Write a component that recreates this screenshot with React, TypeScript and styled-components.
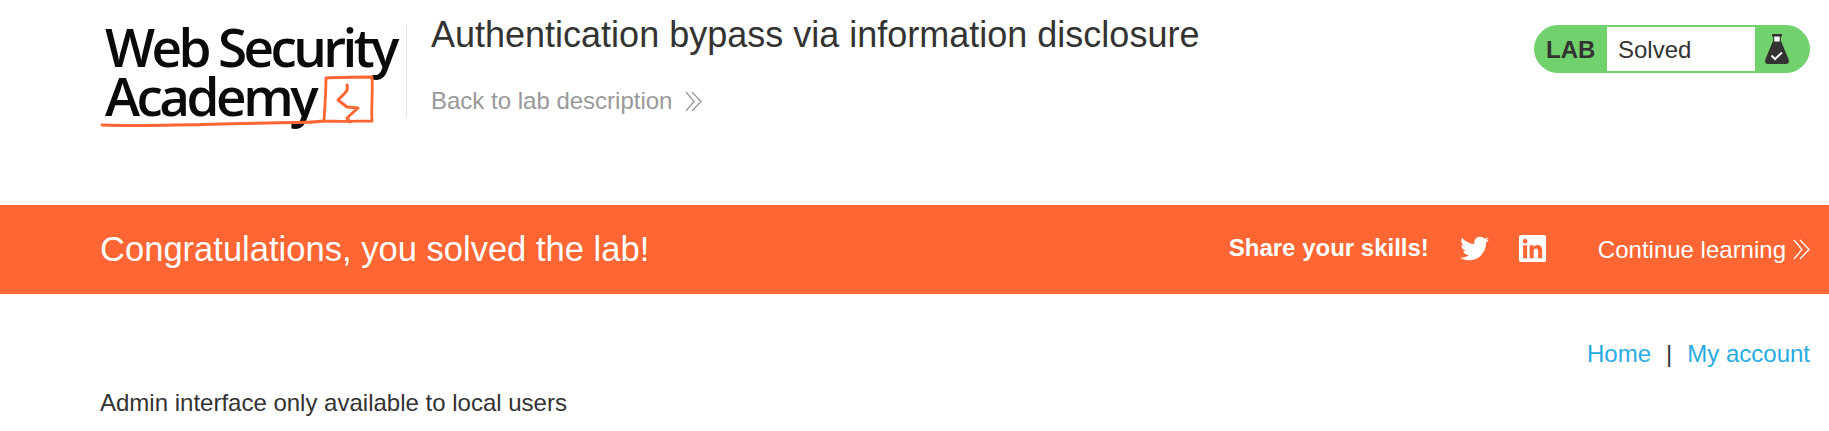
import React from 'react';
import styled, { createGlobalStyle } from 'styled-components';
import { FaTwitter, FaLinkedin } from 'react-icons/fa';

const Global = createGlobalStyle`
  html, body {
    margin: 0;
    padding: 0;
    background: #fff;
    overflow: hidden;
  }

  body {
    font-family: "Liberation Sans", Arial, sans-serif;
    color: #333332;
  }
`;

const Page = styled.div`
  width: 1829px;
  height: 431px;
  overflow: hidden;
`;

const Header = styled.header`
  display: flex;
  align-items: flex-start;
  height: 205px;
  box-sizing: border-box;
  padding: 25px 19px 0 100px;
`;

const LogoLink = styled.a`
  position: relative;
  display: block;
  width: 306px;
  height: 105px;
  flex: none;
`;

const LogoLine = styled.span<{ $spacing: number }>`
  display: block;
  padding-left: 5px;
  height: 49px;
  margin-top: -3px;
  font-family: "Open Sans", sans-serif;
  font-size: 53px;
  font-weight: 600;
  line-height: 49px;
  letter-spacing: ${(p) => p.$spacing}px;
  white-space: nowrap;
  color: #0a0a0a;

  & + & {
    margin-top: 0;
  }
`;

const LogoDrawing = styled.svg`
  position: absolute;
  top: 0;
  left: 0;
`;

const Title = styled.div`
  flex: 1;
  height: 93px;
  border-left: 1px solid #e6e6e6;
  padding-left: 24px;
`;

const Heading = styled.h2`
  margin: -11px 0 0;
  font-size: 36px;
  line-height: 42px;
  font-weight: 400;
  color: #333332;
`;

const BackLink = styled.a`
  display: flex;
  align-items: center;
  gap: 13px;
  margin-top: 31px;
  font-size: 24px;
  line-height: 28px;
  color: #999;
`;

const Widget = styled.div`
  display: flex;
  align-items: stretch;
  width: 276px;
  height: 48px;
  box-sizing: border-box;
  border-radius: 24px;
  background: #70d16d;
  border: 1px solid #70d16d;
  overflow: hidden;
  flex: none;
`;

const WidgetLabel = styled.span`
  width: 72px;
  padding-left: 11px;
  box-sizing: border-box;
  font-size: 24px;
  line-height: 48px;
  font-weight: 700;
  color: #333332;
`;

const WidgetStatus = styled.span`
  width: 148px;
  padding-left: 11px;
  box-sizing: border-box;
  background: #fff;
  font-size: 24px;
  line-height: 46px;
  margin: 1px 0;
  color: #333332;
`;

const WidgetIcon = styled.span`
  display: flex;
  flex: 1;
  align-items: center;
  justify-content: center;
  padding-right: 10px;
`;

const Banner = styled.section`
  display: flex;
  align-items: center;
  height: 89px;
  box-sizing: border-box;
  padding: 0 19px 0 100px;
  background: #ff6633;
  color: #fff;
`;

const BannerTitle = styled.h4`
  flex: 1;
  margin: 0;
  font-size: 34.56px;
  font-weight: 400;
`;

const Share = styled.span`
  font-size: 24px;
  font-weight: 700;
  margin-right: 31px;
  margin-top: -4px;
`;

const SocialIcon = styled.a<{ $gap: number; $size: number }>`
  display: flex;
  color: #fff;
  margin-right: ${(p) => p.$gap}px;
  margin-top: -2px;
  font-size: ${(p) => p.$size}px;
`;

const Continue = styled.a`
  display: flex;
  align-items: center;
  gap: 7px;
  font-size: 24px;
  color: #fff;
`;

const Content = styled.main`
  padding: 46px 19px 0 100px;
`;

const TopLinks = styled.nav`
  display: flex;
  justify-content: flex-end;
  align-items: center;
  gap: 15px;
  font-size: 24px;
  line-height: 28px;
  color: #333332;
`;

const TopLink = styled.a`
  color: #29abe2;
`;

const Message = styled.p`
  margin: 21px 0 0;
  font-size: 24px;
  line-height: 28px;
  color: #333332;
`;

const Chevrons: React.FC<{ color: string }> = ({ color }) => (
  <svg width="17" height="21" viewBox="0 0 17 21" fill="none" stroke={color} strokeWidth="1.3">
    <path d="M1 1l8 9.500-8 9.500M7 1l9 9.500-9 9.500" />
  </svg>
);

const LogoMark = () => (
  <LogoDrawing width="306" height="105" viewBox="0 0 306 105" fill="none" stroke="#ff6633" strokeLinecap="round" strokeLinejoin="round">
    <path d="M2 100c60 2 130-2 196-2.500 10 0 18-.5 26-1.500" strokeWidth="3" />
    <path d="M224 96c1-16 2-30 2-43 15-1 32-1 46-1 1 15-1 30 0 44-14 0-30 1-48 0z" strokeWidth="2.800" />
    <path d="M247 60c1 3 0 6-2 8l-7 7 9 7 11 1-11 10 3 4" strokeWidth="3" />
  </LogoDrawing>
);

const Flask = () => (
  <svg width="24" height="30" viewBox="0 0 24 30">
    <path d="M8 7h8l7.700 18.500c.8 2.200-.4 4.500-2.500 4.500H2.800C.7 30-.5 27.700.3 25.500z" fill="#333332" />
    <path d="M7 0h10v2.500h-1.200V10H8.200V2.500H7z" fill="#333332" />
    <path d="M9.300 2.500h5.400V7.500H9.300z" fill="#fff" />
    <path d="M6.500 21.500l3.500 3.500 7-6.500" fill="none" stroke="#fff" strokeWidth="2" />
  </svg>
);

export default function App() {
  return (
    <Page>
      <Global />
      <Header>
        <LogoLink>
          <LogoLine $spacing={-3.6}>Web Security</LogoLine>
          <LogoLine $spacing={-3.5}>Academy</LogoLine>
          <LogoMark />
        </LogoLink>
        <Title>
          <Heading>Authentication bypass via information disclosure</Heading>
          <BackLink>
            Back to lab description
            <Chevrons color="#999" />
          </BackLink>
        </Title>
        <Widget>
          <WidgetLabel>LAB</WidgetLabel>
          <WidgetStatus>Solved</WidgetStatus>
          <WidgetIcon>
            <Flask />
          </WidgetIcon>
        </Widget>
      </Header>
      <Banner>
        <BannerTitle>Congratulations, you solved the lab!</BannerTitle>
        <Share>Share your skills!</Share>
        <SocialIcon $gap={28} $size={29}>
          <FaTwitter />
        </SocialIcon>
        <SocialIcon $gap={50} $size={31}>
          <FaLinkedin />
        </SocialIcon>
        <Continue>
          Continue learning
          <Chevrons color="#fff" />
        </Continue>
      </Banner>
      <Content>
        <TopLinks>
          <TopLink>Home</TopLink>
          <span>|</span>
          <TopLink>My account</TopLink>
        </TopLinks>
        <Message>Admin interface only available to local users</Message>
      </Content>
    </Page>
  );
}
